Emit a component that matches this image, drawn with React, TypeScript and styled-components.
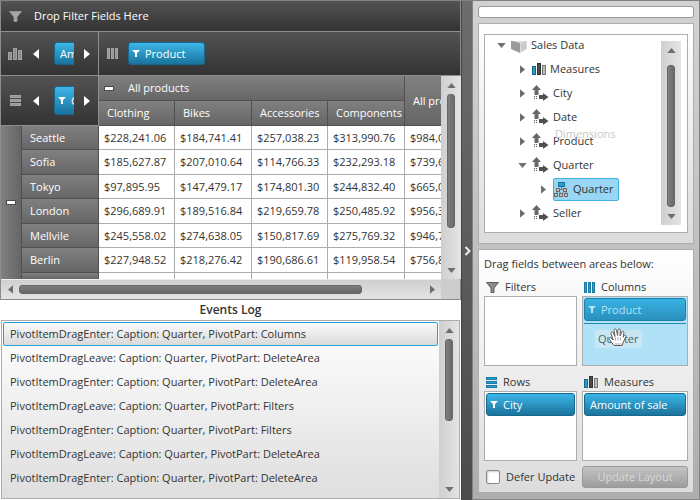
import React from "react";
import styled, { createGlobalStyle, css } from "styled-components";

const GlobalStyle = createGlobalStyle`
  *, *::before, *::after { box-sizing: border-box; }
  body {
    margin: 0;
    background: #fff;
    color: #333;
    font: 11px/16px "Open Sans", "Noto Sans", sans-serif;
  }
  button, input { font: inherit; color: inherit; }
  ul { list-style: none; margin: 0; padding: 0; }
  svg { flex: none; }
`;

const frame = "#adadad";
const darkFill = "linear-gradient(#535353, #333)";
const headFill = "linear-gradient(#808080, #666)";
const blueFill = "linear-gradient(#3cb6e8, #1a739c)";

const Page = styled.main`
  display: grid;
  grid-template-columns: minmax(0, 1fr) 11px 228px;
  height: 100vh;
  border-top: 1px solid #828282;
`;

const LeftPane = styled.div`
  display: flex;
  flex-direction: column;
  min-height: 0;
`;

/* ---------- shared parts ---------- */

const PlainButton = styled.button`
  display: flex;
  align-items: center;
  justify-content: center;
  padding: 0;
  border: 0;
  background: none;
  flex: none;
`;

type Direction = "up" | "down" | "left" | "right";
const trianglePoints: Record<Direction, string> = {
  up: "0,6 5,0 10,6",
  down: "0,0 10,0 5,6",
  left: "6,0 0,5 6,10",
  right: "0,0 6,5 0,10",
};

const Triangle = ({ dir, size = 9, color = "#6e6e6e" }: { dir: Direction; size?: number; color?: string }) => {
  const vertical = dir === "up" || dir === "down";
  const short = Math.round(size * 0.6);
  return (
    <svg
      width={vertical ? size : short}
      height={vertical ? short : size}
      viewBox={vertical ? "0 0 10 6" : "0 0 6 10"}
      aria-hidden="true"
    >
      <polygon points={trianglePoints[dir]} fill={color} />
    </svg>
  );
};

const Bar = styled.div<{ $horizontal?: boolean }>`
  display: flex;
  flex: none;
  ${(p) =>
    p.$horizontal
      ? css`
          height: 20px;
          background: linear-gradient(#cfcfcf, #e4e4e4);
          border-top: 1px solid #f0f0f0;
        `
      : css`
          flex-direction: column;
          width: 20px;
          background: linear-gradient(90deg, #cfcfcf, #e4e4e4);
        `}
`;

const BarButton = styled(PlainButton)<{ $horizontal?: boolean }>`
  ${(p) => (p.$horizontal ? "width: 18px;" : "height: 18px;")}
`;

const Track = styled.div<{ $horizontal?: boolean }>`
  display: flex;
  flex: 1;
  min-height: 0;
  flex-direction: ${(p) => (p.$horizontal ? "row" : "column")};
  padding: ${(p) => (p.$horizontal ? "5px 0" : "0 6px")};
`;

const Thumb = styled.div<{ $horizontal?: boolean }>`
  border-radius: 3px;
  border: 1px solid #666;
  background: ${(p) => (p.$horizontal ? "linear-gradient(#7e7e7e, #666)" : "linear-gradient(90deg, #7e7e7e, #6a6a6a)")};
  flex: none;
`;

const Before = styled.div`
  flex: none;
`;

const ScrollBar = ({ horizontal, start = 0, size }: { horizontal?: boolean; start?: number; size: number }) => (
  <Bar $horizontal={horizontal}>
    <BarButton $horizontal={horizontal} aria-label="Scroll back">
      <Triangle dir={horizontal ? "left" : "up"} />
    </BarButton>
    <Track $horizontal={horizontal}>
      <Before style={{ flexBasis: `${start}%` }} />
      <Thumb $horizontal={horizontal} style={{ flexBasis: `${size}%` }} />
    </Track>
    <BarButton $horizontal={horizontal} aria-label="Scroll forward">
      <Triangle dir={horizontal ? "right" : "down"} />
    </BarButton>
  </Bar>
);

/* ---------- icons ---------- */

const FunnelIcon = ({ light }: { light?: boolean }) => (
  <svg width="13" height="11" viewBox="0 0 13 11" aria-hidden="true">
    <path d="M.5 .5h12L8 6v4.500H5V6z" fill={light ? "#a8a8a8" : "#8b8b8b"} stroke={light ? "#929292" : "#5e5e5e"} />
  </svg>
);

const MiniFunnel = () => (
  <svg width="8" height="7" viewBox="0 0 8 7" aria-hidden="true">
    <path d="M0 0h8L5 3v4H3V3z" fill="currentColor" />
  </svg>
);

const GrayBarsIcon = () => (
  <svg width="14" height="12" viewBox="0 0 14 12" shapeRendering="crispEdges" aria-hidden="true">
    <g fill="#8c8c8c" stroke="#a5a5a5">
      <rect x=".5" y="4.5" width="3" height="7" />
      <rect x="5.5" y=".5" width="3" height="11" />
      <rect x="10.5" y="2.5" width="3" height="9" />
    </g>
  </svg>
);

const MeasureIcon = () => (
  <svg width="14" height="12" viewBox="0 0 14 12" shapeRendering="crispEdges" aria-hidden="true">
    <rect x=".5" y="3.5" width="3" height="8" fill="#2a9ccb" stroke="#17668a" />
    <rect x="5.5" y=".5" width="3" height="11" fill="#4a4a4a" stroke="#333" />
    <rect x="10.5" y="2.5" width="3" height="9" fill="#bbb" stroke="#777" />
  </svg>
);

const StripesIcon = ({ vertical, blue }: { vertical?: boolean; blue?: boolean }) => {
  const fill = blue ? "#2a9ccb" : "#959595";
  const stroke = blue ? "#1b7ba4" : "#a5a5a5";
  return (
    <svg width="11" height="11" viewBox="0 0 11 11" shapeRendering="crispEdges" aria-hidden="true">
      {[0.5, 4.5, 8.5].map((at) =>
        vertical ? (
          <rect key={at} x={at} y=".5" width="2" height="10" fill={fill} stroke={stroke} />
        ) : (
          <rect key={at} x=".5" y={at} width="10" height="2" fill={fill} stroke={stroke} />
        )
      )}
    </svg>
  );
};

const CubeIcon = () => (
  <svg width="16" height="15" viewBox="0 0 16 15" aria-hidden="true">
    <path d="M0 2.500 8 0l8 2-7 3z" fill="#ddd" />
    <path d="M0 2.500 9 5v10L0 11z" fill="#9a9a9a" />
    <path d="M9 5l7-3v9l-7 4z" fill="#c9c9c9" />
    <path d="M9.500 5.500l6-2.600v7.800l-6 3.400z" fill="none" stroke="#e6e6e6" strokeWidth=".6" />
  </svg>
);

const DimensionIcon = () => (
  <svg width="17" height="16" viewBox="0 0 17 16" aria-hidden="true">
    <path d="M4.500 0 9 5H6.500V10H2.500V5H0z" fill="#686868" />
    <path d="M7 10h4V8l5.500 4-5.500 4v-2H7z" fill="#505050" />
    <path d="M2 11h1v1H2zM2 13h1v1H2zM4 13h1v1H4zM4 11h1v1H4z" fill="#555" />
  </svg>
);

const HierarchyIcon = () => (
  <svg width="15" height="15" viewBox="0 0 15 15" aria-hidden="true">
    <rect x="4.500" y=".5" width="6" height="4" fill="#2a9ccb" stroke="#1a759c" />
    <path d="M7.500 5v2M4 7.500h7M2 12l2-3M13 12l-2-3M4.500 9l3 3M10.500 9l-3 3" stroke="#777" fill="none" />
    <g fill="#c4c0bc" stroke="#706c6a">
      <rect x="2.500" y="6.500" width="3" height="3" />
      <rect x="9.500" y="6.500" width="3" height="3" />
      <rect x=".5" y="11.500" width="3" height="3" />
      <rect x="5.500" y="11.500" width="3" height="3" />
      <rect x="10.500" y="11.500" width="3" height="3" />
    </g>
  </svg>
);

const HandIcon = () => (
  <svg width="19" height="19" viewBox="0 0 19 19" aria-hidden="true">
    <path
      d="M6 17.500 1.500 11.500c-1.400-2 .7-2.800 2-1.300L5.200 12 3 5.500c-.6-1.800 1.500-2.300 2.100-.8L7 8.500 6 2.500C5.700.7 8 .4 8.400 2.100L9.600 7.500l.3-5.400c.1-1.700 2.300-1.600 2.300.1l-.1 5.700L13.700 4c.6-1.600 2.500-1 2.200.7L15 9.200l1-1.500c.9-1.200 2.400-.4 1.900 1l-2.500 5.100-1.300 3.700z"
      fill="#fff"
      stroke="#5c5c5c"
    />
    <path d="M7.500 9.500v3M10 9v3.500M12.500 9.500v3M7 16h6.500" stroke="#aaa" />
  </svg>
);

const ChevronIcon = () => (
  <svg width="7" height="10" viewBox="0 0 7 10" aria-hidden="true">
    <path d="M1.500 1 5.500 5l-4 4" fill="none" stroke="#eee" strokeWidth="2" />
  </svg>
);

/* ---------- pivot grid ---------- */

const Pivot = styled.section`
  display: flex;
  flex-direction: column;
  flex: 1;
  min-height: 0;
  border: solid #8c8c8c;
  border-width: 0 1px 1px;
`;

const FilterStrip = styled.div`
  display: flex;
  align-items: center;
  flex: none;
  gap: 12px;
  height: 31px;
  padding-left: 8px;
  color: #fff;
  background: ${darkFill};
  border-bottom: 1px solid #8f8f8f;
`;

const AreaStrips = styled.div`
  display: grid;
  grid-template-columns: 98px minmax(0, 1fr);
  flex: none;
  height: 44px;
  color: #fff;
  border-bottom: 1px solid #8f8f8f;
`;

const MeasureStrip = styled.div`
  display: grid;
  grid-template-columns: 24px 18px 38px 8px;
  align-items: center;
  justify-items: center;
  padding-left: 2px;
  background: ${darkFill};
  border-right: 1px solid #8f8f8f;
`;

const RowStrip = styled(MeasureStrip)`
  height: 50px;
  border-bottom: 1px solid #8f8f8f;
`;

const ColumnStrip = styled.div`
  display: flex;
  align-items: center;
  gap: 10px;
  padding-left: 8px;
  background: ${darkFill};
`;

const ChipClip = styled.div`
  width: 20px;
  overflow: hidden;
`;

const Chip = styled.button<{ $width?: number; $tall?: boolean; $faded?: boolean; $plain?: boolean }>`
  display: flex;
  align-items: center;
  gap: 5px;
  width: ${(p) => (p.$width ? `${p.$width}px` : "100%")};
  height: ${(p) => (p.$tall ? 29 : 23)}px;
  padding: 0 ${(p) => (p.$plain ? 5 : 3)}px;
  border: 1px solid #17688f;
  border-radius: 3px;
  color: #fff;
  white-space: nowrap;
  background: ${blueFill};
  ${(p) => p.$faded && "background: linear-gradient(#38b2e4, #2a90bd); border-color: #1b80ac; color: #b4e2f5;"}
`;

const PivotBody = styled.div`
  display: grid;
  grid-template-columns: minmax(0, 1fr) 19px;
  grid-template-rows: minmax(0, 1fr) 20px;
  flex: 1;
  min-height: 0;
`;

const TableClip = styled.div`
  overflow: hidden;
`;

const BarCorner = styled.div`
  background: #cdcdcd;
`;

const PivotTable = styled.table`
  width: 500px;
  table-layout: fixed;
  border-collapse: separate;
  border-spacing: 0;
  tbody tr { height: 24px; }
  tbody tr:nth-child(even) { height: 25px; }
  tbody tr:last-child { height: 7px; }
`;

const CornerCell = styled.td`
  padding: 0;
  color: #fff;
`;

const HeadCell = styled.th<{ $group?: boolean }>`
  height: 25px;
  padding: 0 0 0 8px;
  font-weight: 400;
  text-align: left;
  white-space: nowrap;
  color: #fff;
  background: ${headFill};
  border: solid #505050;
  border-width: 0 1px 1px 0;
  ${(p) => p.$group && "padding-left: 5px;"}
`;

const GroupLabel = styled.div`
  display: flex;
  align-items: center;
  gap: 14px;
`;

const ToggleCell = styled(HeadCell)`
  padding: 0;
  background: linear-gradient(90deg, #808080, #666);
`;

const Minus = styled.button`
  display: block;
  width: 10px;
  height: 5px;
  margin: 0 auto;
  padding: 0;
  border: 1px solid #4a4a4a;
  background: #fff;
`;

const GroupMinus = styled(Minus)`
  margin: 0;
`;

const RowHead = styled(HeadCell)`
  height: auto;
`;

const Cell = styled.td`
  padding: 0 5px;
  white-space: nowrap;
  background: #fff;
  border: solid ${frame};
  border-width: 0 1px 1px 0;
`;

const columns = ["Clothing", "Bikes", "Accessories", "Components"];
const rows: [string, string[]][] = [
  ["Seattle", ["$228,241.06", "$184,741.41", "$257,038.23", "$313,990.76", "$984,011.46"]],
  ["Sofia", ["$185,627.87", "$207,010.64", "$114,766.33", "$232,293.18", "$739,698.02"]],
  ["Tokyo", ["$97,895.95", "$147,479.17", "$174,801.30", "$244,832.40", "$665,008.82"]],
  ["London", ["$296,689.91", "$189,516.84", "$219,659.78", "$250,485.92", "$956,352.45"]],
  ["Mellvile", ["$245,558.02", "$274,638.05", "$150,817.69", "$275,769.32", "$946,783.08"]],
  ["Berlin", ["$227,948.52", "$218,276.42", "$190,686.61", "$119,958.54", "$756,870.09"]],
  ["", ["", "", "", "", ""]],
];

const PivotGrid = () => (
  <Pivot>
    <FilterStrip>
      <FunnelIcon light />
      Drop Filter Fields Here
    </FilterStrip>
    <AreaStrips>
      <MeasureStrip>
        <GrayBarsIcon />
        <PlainButton aria-label="Previous measure"><Triangle dir="left" size={10} color="#fff" /></PlainButton>
        <ChipClip><Chip $width={96} $plain>Amount of sale</Chip></ChipClip>
        <PlainButton aria-label="Next measure"><Triangle dir="right" size={10} color="#fff" /></PlainButton>
      </MeasureStrip>
      <ColumnStrip>
        <StripesIcon vertical />
        <Chip $width={77}><MiniFunnel />Product</Chip>
      </ColumnStrip>
    </AreaStrips>
    <PivotBody>
      <TableClip>
        <PivotTable>
          <colgroup>
            <col width="21" />
            <col width="77" />
            <col width="76" />
            <col width="77" />
            <col width="76" />
            <col width="77" />
            <col width="96" />
          </colgroup>
          <thead>
            <tr>
              <CornerCell colSpan={2} rowSpan={2}>
                <RowStrip>
                  <StripesIcon />
                  <PlainButton aria-label="Previous row field"><Triangle dir="left" size={10} color="#fff" /></PlainButton>
                  <ChipClip><Chip $width={77} $tall><MiniFunnel />City</Chip></ChipClip>
                  <PlainButton aria-label="Next row field"><Triangle dir="right" size={10} color="#fff" /></PlainButton>
                </RowStrip>
              </CornerCell>
              <HeadCell colSpan={4} $group>
                <GroupLabel><GroupMinus aria-label="Collapse all products" />All products</GroupLabel>
              </HeadCell>
              <HeadCell rowSpan={2}>All products</HeadCell>
            </tr>
            <tr>
              {columns.map((c) => <HeadCell key={c}>{c}</HeadCell>)}
            </tr>
          </thead>
          <tbody>
            {rows.map(([city, values], i) => (
              <tr key={city}>
                {i === 0 && (
                  <ToggleCell rowSpan={rows.length}><Minus aria-label="Collapse cities" /></ToggleCell>
                )}
                <RowHead scope="row">{city}</RowHead>
                {values.map((v, n) => <Cell key={n}>{v}</Cell>)}
              </tr>
            ))}
          </tbody>
        </PivotTable>
      </TableClip>
      <ScrollBar size={80} />
      <ScrollBar horizontal size={85} />
      <BarCorner />
    </PivotBody>
  </Pivot>
);

/* ---------- events log ---------- */

const LogTitle = styled.h2`
  flex: none;
  margin: 0;
  padding-top: 2px;
  height: 20px;
  font-size: 12px;
  font-weight: 600;
  line-height: 16px;
  text-align: center;
`;

const LogBox = styled.section`
  display: flex;
  flex: none;
  margin: 0 1px 1px;
  border: 1px solid ${frame};
  background: linear-gradient(#fff, #dedede);
`;

const LogList = styled.ul`
  flex: 1;
  min-width: 0;
  && { padding: 1px 1px 8px; }
`;

const LogItem = styled.li<{ $active?: boolean }>`
  display: flex;
  align-items: center;
  height: 24px;
  padding-left: 6px;
  border: 1px solid transparent;
  border-radius: 2px;
  white-space: nowrap;
  ${(p) => p.$active && "border-color: #25a0da; background: linear-gradient(#fafafa, #dadada);"}
`;

const events = [
  ["Enter", "Columns"],
  ["Leave", "DeleteArea"],
  ["Enter", "DeleteArea"],
  ["Leave", "Filters"],
  ["Enter", "Filters"],
  ["Leave", "DeleteArea"],
  ["Enter", "DeleteArea"],
];

const EventsLog = () => (
  <>
    <LogTitle>Events Log</LogTitle>
    <LogBox>
      <LogList>
        {events.map(([kind, part], i) => (
          <LogItem key={i} $active={i === 0}>
            {`PivotItemDrag${kind}: Caption: Quarter, PivotPart: ${part}`}
          </LogItem>
        ))}
      </LogList>
      <ScrollBar size={58} />
    </LogBox>
  </>
);

/* ---------- field list ---------- */

const Splitter = styled.button`
  display: flex;
  align-items: center;
  justify-content: center;
  padding: 0;
  border: 0;
  border-left: 1px solid #444;
  background: linear-gradient(#6c6c6c, #4c4c4c);
`;

const FieldPane = styled.aside`
  display: flex;
  flex-direction: column;
  gap: 5px;
  min-height: 0;
  padding: 5px 5px 6px;
  border: solid #828282;
  border-width: 0 1px 1px 1px;
  background: linear-gradient(#d2d2d2, #aeaeae);
`;

const SearchInput = styled.input`
  flex: none;
  width: 100%;
  height: 12px;
  border: 1px solid #999;
  border-radius: 3px;
  background: #fff;
`;

const Card = styled.section`
  padding: 10px 5px;
  border: 1px solid ${frame};
  background: linear-gradient(#fff, #dcdcdc);
`;

const TreeCard = styled(Card)`
  display: flex;
  flex: 1;
  min-height: 0;
`;

const TreeBox = styled.div`
  position: relative;
  display: flex;
  flex: 1;
  min-height: 0;
  padding: 6px 6px 7px;
  border: 1px solid ${frame};
  background: #fff;
`;

const TreeClip = styled.div`
  display: flex;
  align-items: flex-end;
  flex: 1;
  overflow: hidden;
`;

const TreeItem = styled.li<{ $level: number }>`
  display: flex;
  align-items: center;
  height: 24px;
  padding-left: ${(p) => 5 + p.$level * 21}px;
`;

const Expander = styled(PlainButton)`
  width: 11px;
  margin-right: 4px;
`;

const TreeLabel = styled.span<{ $selected?: boolean }>`
  display: flex;
  align-items: center;
  gap: 4px;
  height: 23px;
  ${(p) => p.$selected && "padding: 0 4px 0 0; border: 1px solid #3fb2e2; border-radius: 2px; background: #97d7f3;"}
`;

const GhostCaption = styled.span`
  position: absolute;
  left: 70px;
  top: 91px;
  color: #c8c8c8;
`;

type Node = { label: string; level: number; kind: "cube" | "measure" | "dimension" | "level"; open?: boolean };
const nodes: Node[] = [
  { label: "Sales Data", level: 0, kind: "cube", open: true },
  { label: "Measures", level: 1, kind: "measure" },
  { label: "City", level: 1, kind: "dimension" },
  { label: "Date", level: 1, kind: "dimension" },
  { label: "Product", level: 1, kind: "dimension" },
  { label: "Quarter", level: 1, kind: "dimension", open: true },
  { label: "Quarter", level: 2, kind: "level" },
  { label: "Seller", level: 1, kind: "dimension" },
];
const nodeIcons = { cube: CubeIcon, measure: MeasureIcon, dimension: DimensionIcon, level: HierarchyIcon };

const FieldTree = () => (
  <TreeCard>
    <TreeBox>
      <TreeClip>
        <ul>
          {nodes.map((n, i) => {
            const Icon = nodeIcons[n.kind];
            return (
              <TreeItem key={i} $level={n.level}>
                <Expander aria-label={`Toggle ${n.label}`}>
                  <Triangle dir={n.open ? "down" : "right"} />
                </Expander>
                <TreeLabel $selected={n.kind === "level"}><Icon />{n.label}</TreeLabel>
              </TreeItem>
            );
          })}
        </ul>
      </TreeClip>
      <ScrollBar start={4} size={96} />
      <GhostCaption>Dimensions</GhostCaption>
    </TreeBox>
  </TreeCard>
);

const AreasCard = styled(Card)`
  display: grid;
  flex: none;
  grid-template-columns: minmax(0, 93fr) minmax(0, 106fr);
  column-gap: 5px;
  padding: 4px 5px;
`;

const Hint = styled.p`
  grid-column: 1 / -1;
  margin: 0;
  line-height: 20px;
`;

const AreaTitle = styled.h3`
  display: flex;
  align-items: center;
  gap: 6px;
  height: 22px;
  margin: 0;
  padding: 4px 0 0 2px;
  font-size: 11px;
  font-weight: 400;
`;

const DropArea = styled.div<{ $target?: boolean }>`
  position: relative;
  height: 70px;
  margin-bottom: 3px;
  padding: 1px;
  border: 1px solid ${frame};
  background: ${(p) => (p.$target ? "#b1e1f6" : "#fff")};
`;

const DropLine = styled.div`
  height: 3px;
  border-bottom: 1px solid #1e87b4;
`;

const DragGhost = styled.div`
  position: absolute;
  left: 12px;
  top: 33px;
  padding: 0 3px;
  line-height: 18px;
  border-radius: 2px;
  color: #4c626c;
  background: #c9e7f2;
`;

const DragCursor = styled.div`
  position: absolute;
  left: 25px;
  top: 31px;
  line-height: 0;
`;

const DeferLabel = styled.label`
  display: flex;
  align-items: center;
  gap: 6px;
  padding-left: 2px;
  white-space: nowrap;
`;

const CheckBox = styled.input`
  appearance: none;
  flex: none;
  width: 14px;
  height: 14px;
  margin: 0;
  border: 1px solid #8a8a8a;
  border-radius: 2px;
  background: #fff;
  box-shadow: inset 1px 1px 2px #ccc;
`;

const Footer = styled.div`
  display: grid;
  grid-column: 1 / -1;
  grid-template-columns: minmax(0, 93fr) minmax(0, 106fr);
  column-gap: 5px;
  padding-top: 2px;
`;

const UpdateButton = styled.button`
  height: 22px;
  padding: 0;
  border: 1px solid #999;
  border-radius: 3px;
  color: #d9d9d9;
  background: linear-gradient(#c4c4c4, #9c9c9c);
`;

const FieldAreas = () => (
  <AreasCard>
    <Hint>Drag fields between areas below:</Hint>
    <AreaTitle><FunnelIcon />Filters</AreaTitle>
    <AreaTitle><StripesIcon vertical blue />Columns</AreaTitle>
    <DropArea />
    <DropArea $target>
      <Chip $faded><MiniFunnel />Product</Chip>
      <DropLine />
      <DragGhost>Quarter</DragGhost>
      <DragCursor><HandIcon /></DragCursor>
    </DropArea>
    <AreaTitle><StripesIcon blue />Rows</AreaTitle>
    <AreaTitle><MeasureIcon />Measures</AreaTitle>
    <DropArea><Chip><MiniFunnel />City</Chip></DropArea>
    <DropArea><Chip $plain>Amount of sale</Chip></DropArea>
    <Footer>
      <DeferLabel><CheckBox type="checkbox" />Defer Update</DeferLabel>
      <UpdateButton disabled>Update Layout</UpdateButton>
    </Footer>
  </AreasCard>
);

export default function App() {
  return (
    <>
      <GlobalStyle />
      <Page>
        <LeftPane>
          <PivotGrid />
          <EventsLog />
        </LeftPane>
        <Splitter aria-label="Collapse field list"><ChevronIcon /></Splitter>
        <FieldPane>
          <SearchInput type="text" aria-label="Search fields" />
          <FieldTree />
          <FieldAreas />
        </FieldPane>
      </Page>
    </>
  );
}
